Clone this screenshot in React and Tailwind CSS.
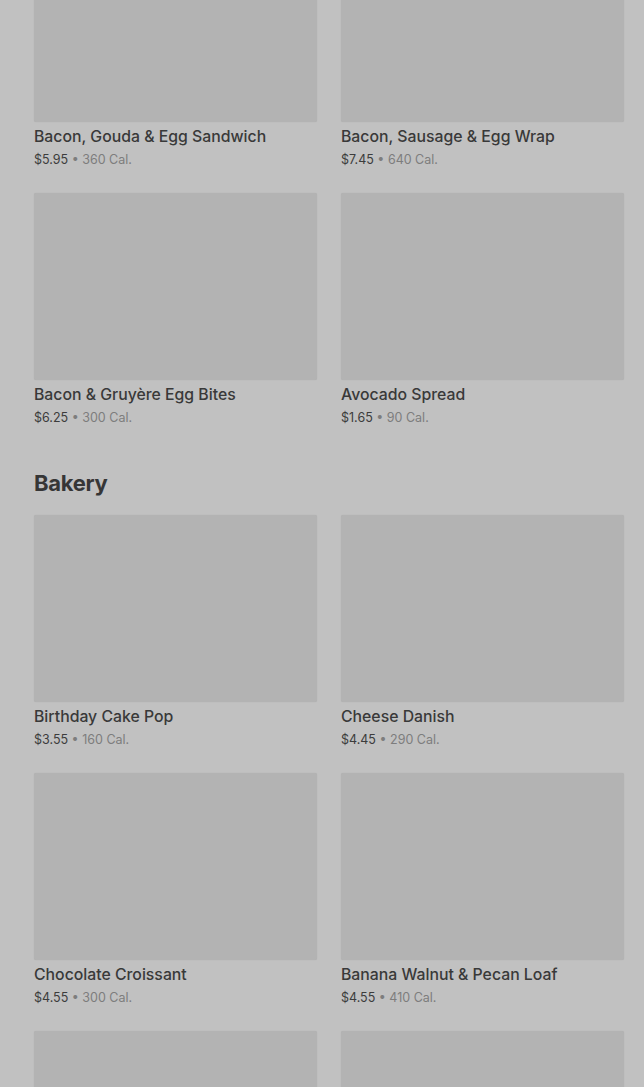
const breakfast = [
  { name: "Bacon, Gouda & Egg Sandwich", price: "$5.95", cal: "360 Cal." },
  { name: "Bacon, Sausage & Egg Wrap", price: "$7.45", cal: "640 Cal." },
  { name: "Bacon & Gruyère Egg Bites", price: "$6.25", cal: "300 Cal." },
  { name: "Avocado Spread", price: "$1.65", cal: "90 Cal." },
]

const bakery = [
  { name: "Birthday Cake Pop", price: "$3.55", cal: "160 Cal." },
  { name: "Cheese Danish", price: "$4.45", cal: "290 Cal." },
  { name: "Chocolate Croissant", price: "$4.55", cal: "300 Cal." },
  { name: "Banana Walnut & Pecan Loaf", price: "$4.55", cal: "410 Cal." },
  { name: "", price: "", cal: "" },
  { name: "", price: "", cal: "" },
]

function Item({ item }) {
  return (
    <div className="flex flex-col">
      <div className="h-[187px] bg-[#b3b3b3] rounded-[2px] shadow-[0_0_1px_rgba(0,0,0,0.12)]" />
      {item.name && (
        <>
          <div className="mt-[3px] text-[15.8px] leading-[24px] font-medium text-[#393939]">
            {item.name}
          </div>
          <div className="mt-[1px] text-[12.5px] leading-[20px] text-[#3c3c3c]">
            {item.price}
            <span className="text-[#7d7d7d]"> • {item.cal}</span>
          </div>
        </>
      )}
    </div>
  )
}

export default function App() {
  return (
    <div
      className="h-[1087px] overflow-hidden bg-[#c1c1c1] pl-[34px] pr-[20px]"
      style={{ fontFamily: "Inter, 'Noto Sans', sans-serif" }}
    >
      <div className="mt-[-65px] grid grid-cols-2 gap-x-6 gap-y-[23px]">
        {breakfast.map((item, i) => (
          <Item key={i} item={item} />
        ))}
      </div>
      <h2 className="mt-[39px] text-[22px] leading-[32px] font-bold text-[#363636] tracking-[-0.3px]">
        Bakery
      </h2>
      <div className="mt-[16px] grid grid-cols-2 gap-x-6 gap-y-[23px]">
        {bakery.map((item, i) => (
          <Item key={i} item={item} />
        ))}
      </div>
    </div>
  )
}
